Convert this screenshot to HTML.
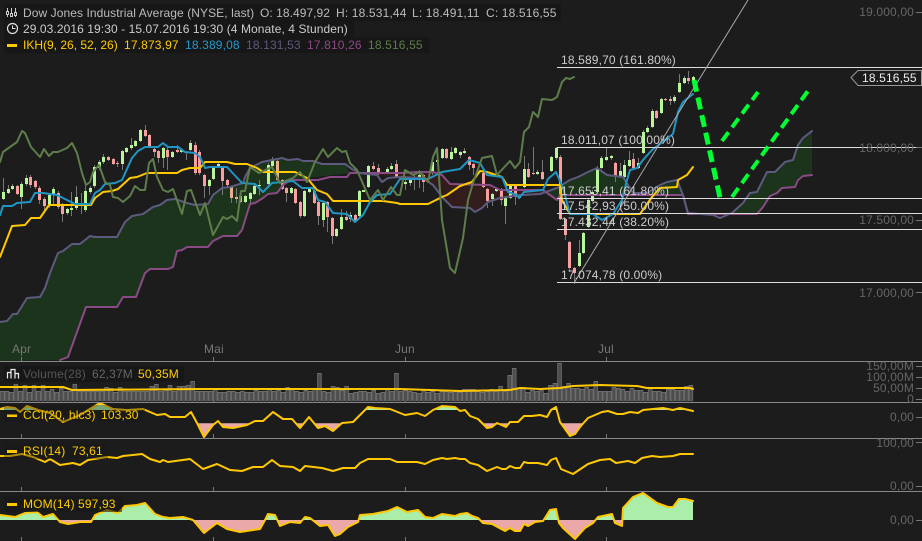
<!DOCTYPE html>
<html><head><meta charset="utf-8"><style>
html,body{margin:0;padding:0;background:#1c1c1c;width:922px;height:541px;overflow:hidden}
svg{display:block;position:absolute;left:0;top:0}
text{font-family:"Liberation Sans",sans-serif;font-size:12px;letter-spacing:.15px}
.ax{fill:#666}.lb{fill:#bbb}.fb{fill:#ccc}.y{fill:#fc0}
.l{fill:none;stroke-width:2;stroke-linejoin:round;stroke-linecap:round}
</style></head><body>
<svg width="922" height="541" viewBox="0 0 922 541" xmlns="http://www.w3.org/2000/svg">
<defs>
<clipPath id="main"><rect x="0" y="0" width="922" height="361"/></clipPath>
<clipPath id="volC"><rect x="0" y="362" width="695" height="39.5"/></clipPath>
<clipPath id="cciP"><rect x="0" y="423.3" width="922" height="15"/></clipPath>
<clipPath id="cciG"><rect x="0" y="403" width="922" height="7"/></clipPath>
<clipPath id="momP"><rect x="0" y="520" width="922" height="21"/></clipPath>
<clipPath id="momG"><rect x="0" y="492" width="922" height="28"/></clipPath>
<polygon id="cciA" points="0,409 7,407 15,408 20,412 27,406 38,410 50,413 63,422 80,415 93,407 100,403 113,409 127,410 143,409 157,415 165,414 170,417 185,417 191,412 197,423 204,437 213,425 218,421 223,427 233,428 247,425 255,421 263,421 273,412 283,419 292,419 300,428 309,417 318,428 325,426 333,431 342,423 353,422 368,407 375,408 390,409 405,415 417,413 425,416 433,410 442,406 455,407 460,411 465,410 470,416 478,419 487,428 492,427 497,423 506,427 510,422 518,422 524,416 532,416 540,415 547,417 551,410 556,407 560,422 570,436 575,434 580,427 588,418 602,412 608,411 617,414 623,414 630,412 638,413 643,410 663,408 673,410 680,408 693,411 693,417 0,417"/>
<polygon id="momA" points="0,515 15,517 25,513 37,512 43,517 53,514 60,522 68,524 80,522 91,522 95,515 107,510 118,513 125,506 137,505 145,503 155,514 163,517 170,518 183,517 193,520 204,533 217,523 227,529 240,532 260,529 265,520 268,514 275,515 280,526 290,522 300,523 305,517 310,518 320,526 328,525 335,536 340,534 348,527 358,522 360,515 373,514 388,511 397,507 407,512 418,510 425,517 433,518 442,514 455,516 460,514 467,513 472,516 478,518 483,523 492,524 505,531 510,528 515,531 520,531 524,524 528,526 535,522 543,521 550,510 556,509 559,523 563,528 575,539 585,528 593,523 598,517 612,514 615,523 622,526 623,508 633,497 643,493 657,503 668,507 673,507 679,499 685,499 693,501 693,520 0,520"/>
<path id="vol" fill="none" d="M-2.2 401m4.53-10v10m4.53-10v10m4.53-9v9m4.53-17v17m4.53-10v10m4.53-16v16m4.53-9v9m4.53-16v16m4.53-10v10m4.53-16v16m4.53-10v10m4.53-12v12m4.53-9v9m4.53-13v13m4.53-10v10m4.53-10v10m4.53-17v17m4.53-10v10m4.53-10v10m4.53-10v10m4.53-10v10m4.53-10v10m4.53-10v10m4.53-14v14m4.53-13v13m4.53-9v9m4.53-14v14m4.53-10v10m4.53-10v10m4.53-10v10m4.53-10v10m4.53-10v10m4.53-10v10m4.53-15v15m4.53-17v17m4.53-10v10m4.53-11v11m4.53-16v16m4.53-10v10m4.53-15v15m4.53-15v15m4.53-16v16m4.53-20v20m4.53-10v10m4.53-10v10m4.53-10v10m4.53-10v10m4.53-12v12m4.53-9v9m4.53-9v9m4.53-10v10m4.53-10v10m4.53-9v9m4.53-10v10m4.53-9v9m4.53-9v9m4.53-11v11m4.53-10v10m4.53-10v10m4.53-12v12m4.53-10v10m4.53-11v11m4.53-9v9m4.53-14v14m4.53-13v13m4.53-10v10m4.53-9v9m4.53-11v11m4.53-10v10m4.53-12v12m4.53-28v28m4.53-10v10m4.53-9v9m4.53-15v15m4.53-14v14m4.53-11v11m4.53-15v15m4.53-8v8m4.53-9v9m4.53-10v10m4.53-10v10m4.53-9v9m4.53-11v11m4.53-8v8m4.53-9v9m4.53-12v12m4.53-10v10m4.53-28v28m4.53-10v10m4.53-11v11m4.53-10v10m4.53-9v9m4.53-8v8m4.53-11v11m4.53-9v9m4.53-10v10m4.53-8v8m4.53-10v10m4.53-10v10m4.53-9v9m4.53-10v10m4.53-9v9m4.53-12v12m4.53-12v12m4.53-12v12m4.53-10v10m4.53-9v9m4.53-10v10m4.53-12v12m4.53-10v10m4.53-15v15m4.53-10v10m4.53-26v26m4.53-33v33m4.53-13v13m4.53-14v14m4.53-9v9m4.53-11v11m4.53-10v10m4.53-11v11m4.53-8v8m4.53-16v16m4.53-18v18m4.53-38v38m4.53-15v15m4.53-18v18m4.53-13v13m4.53-13v13m4.53-12v12m4.53-14v14m4.53-12v12m4.53-20v20m4.53-10v10m4.53-10v10m4.53-10v10m4.53-14v14m4.53-13v13m4.53-12v12m4.53-10v10m4.53-13v13m4.53-11v11m4.53-11v11m4.53-9v9m4.53-14v14m4.53-10v10m4.53-10v10m4.53-9v9m4.53-12v12m4.53-12v12m4.53-11v11m4.53-11v11m4.53-15v15m4.53-16v16"/>
</defs>
<rect width="922" height="541" fill="#1c1c1c"/>

<g clip-path="url(#main)">
<!-- cloud -->
<polygon fill="#1c331c" points="0,322 7,321 13,314 17,314 27,298 40,297 45,288 50,273 58,253 63,251 72,244 80,244 90,236 95,237 117,237 125,222 132,216 143,214 153,207 160,205 167,200 175,199 187,203 195,205 208,204 213,195 222,188 230,187 243,183 245,177 250,168 262,162 272,160 282,158 288,160 298,159 303,161 313,161 322,164 345,164 350,173 290,180 283,185 277,193 268,194 263,198 255,203 250,204 242,230 237,236 223,236 213,241 208,247 187,247 182,250 177,251 173,267 168,269 150,269 145,273 136,297 123,297 117,307 86,307 68,357 60,360 0,361"/>
<polygon fill="#331c1c" points="350,173 400,173 417,172 433,172 442,175 450,184 490,185 500,190 543,191 540,194 523,195 513,196 500,198 488,202 482,208 475,212 470,208 452,207 443,198 433,185 423,178 400,177 377,175 367,174 360,173 352,169"/>
<polygon fill="#1c331c" points="540,194 557,188 570,180 583,175 597,168 607,175 623,177 633,193 647,193 660,185 667,182 677,180 683,195 688,213 693,213 713,214 732,213 743,203 750,193 757,192 767,172 775,172 785,162 793,160 798,145 803,138 812,131 812,175 803,176 797,178 795,187 782,188 777,193 770,196 763,207 757,214 688,214 683,195 560,195 557,200 543,191"/>

<!-- wicks -->
<path fill="none" stroke="#777" stroke-width="1" d="M3.5 178V200M8.5 185V194M12.5 184V190M17.5 185V195M21.5 182V209M26.5 175V186M30.5 175V188M35.5 180V189M39.5 186V204M44.5 197V210M49.5 193V208M53.5 187V205M58.5 191V209M62.5 203V222M67.5 208V215M71.5 192V216M76.5 186V210M81.5 193V214M85.5 186V212M90.5 186V194M94.5 165V188M99.5 160V170M103.5 154V164M108.5 156V161M113.5 158V165M117.5 161V167M122.5 150V170M126.5 147V153M131.5 138V150M135.5 140V147M140.5 129V142M145.5 125V137M149.5 134V148M154.5 148V157M158.5 150V163M163.5 147V168M167.5 147V170M172.5 151V158M177.5 145V153M181.5 149V153M186.5 153V160M190.5 140V151M195.5 142V175M199.5 150V175M204.5 174V198M209.5 179V195M213.5 167V180M218.5 163V168M222.5 167V195M227.5 179V187M231.5 186V203M236.5 188V203M240.5 195V203M245.5 195V203M250.5 192V204M254.5 185V195M259.5 180V195M268.5 163V186M272.5 157V167M277.5 160V181M282.5 179V190M286.5 187V202M291.5 187V194M295.5 188V204M300.5 201V218M304.5 190V217M309.5 188V193M314.5 190V204M318.5 201V225M323.5 202V227M327.5 201V232M332.5 217V244M336.5 228V237M341.5 209V230M346.5 211V221M350.5 212V222M355.5 214V222M359.5 190V217M368.5 165V188M373.5 162V170M378.5 164V175M387.5 167V173M391.5 163V170M396.5 160V178M405.5 176V190M410.5 178V186M414.5 172V190M419.5 170V188M423.5 174V192M432.5 160V175M442.5 148V159M446.5 148V159M451.5 147V160M455.5 147V154M460.5 151V158M464.5 148V154M469.5 156V170M473.5 163V175M483.5 170V188M487.5 188V208M492.5 193V206M496.5 188V192M501.5 188V205M505.5 197V224M510.5 184V199M515.5 185V205M519.5 194V199M524.5 156V188M528.5 163V178M533.5 147V175M537.5 170V175M542.5 160V180M551.5 156V172M556.5 147V160M560.5 155V220M565.5 218V240M569.5 241V272M574.5 267V284M579.5 240V267M583.5 232V254M588.5 198V228M592.5 190V202M597.5 166V193M601.5 156V169M606.5 148V161M611.5 155V160M615.5 162V182M620.5 163V178M624.5 160V178M629.5 151V167M633.5 153V170M638.5 158V169M643.5 130V154M647.5 126V133M652.5 109V128M656.5 110V119M661.5 98V114M665.5 98V101M670.5 96V105M674.5 95V103M679.5 74V93M684.5 76V84M688.5 71V84M693.5 76V82"/>
<!-- green bodies -->
<path fill="none" stroke="#b9f59a" stroke-width="3" d="M3.5 192V199M8.5 189V193M12.5 186V189M21.5 184V197M26.5 178V184M49.5 195V205M53.5 189V194M67.5 209V213M71.5 208V210M76.5 197V208M85.5 191V210M90.5 188V192M94.5 167V186M99.5 162V168M103.5 157V162M122.5 151V164M126.5 148V152M131.5 145V148M135.5 141V146M140.5 130V141M163.5 148V158M172.5 152V157M181.5 150V152M190.5 143V150M209.5 180V186M213.5 168V179M218.5 164V167M245.5 196V202M250.5 193V199M254.5 186V194M259.5 185V186M268.5 165V184M272.5 159V166M291.5 188V193M304.5 191V216M309.5 189V192M323.5 203V220M336.5 229V236M341.5 217V229M350.5 215V219M359.5 191V216M363.5 190V192M368.5 166V187M387.5 169V172M391.5 166V169M405.5 182V184M410.5 179V183M419.5 175V180M432.5 162V173M437.5 160V162M442.5 149V158M451.5 152V159M455.5 148V153M460.5 152V155M464.5 151V153M492.5 194V199M496.5 189V191M505.5 198V206M510.5 186V198M519.5 195V198M524.5 169V187M537.5 172V174M551.5 157V171M556.5 148V158M579.5 253V266M583.5 233V253M588.5 200V227M592.5 192V201M597.5 168V192M601.5 158V168M606.5 157V160M611.5 156V158M620.5 171V177M624.5 165V177M629.5 160V166M638.5 163V168M643.5 132V153M647.5 128V132M652.5 111V127M661.5 99V113M674.5 97V101M679.5 83V92M684.5 78V83M693.5 77V81"/>
<!-- red bodies -->
<path fill="none" stroke="#fa9f9f" stroke-width="3" d="M17.5 186V194M30.5 177V185M35.5 181V187M39.5 188V200M44.5 199V206M58.5 193V207M62.5 206V214M108.5 157V160M113.5 159V164M117.5 163V164M145.5 130V136M149.5 135V147M154.5 149V152M158.5 151V158M167.5 150V157M177.5 150V152M195.5 145V173M199.5 152V173M204.5 175V186M222.5 168V181M227.5 180V185M282.5 180V189M286.5 188V193M295.5 189V203M300.5 202V216M314.5 191V203M318.5 202V216M327.5 202V217M332.5 218V236M346.5 217V220M355.5 215V221M373.5 166V169M378.5 168V173M396.5 164V177M423.5 175V182M446.5 149V158M469.5 157V165M473.5 164V168M483.5 173V187M487.5 189V201M501.5 189V200M515.5 186V197M528.5 169V177M533.5 173V174M542.5 172V179M560.5 157V219M565.5 219V235M569.5 242V268M574.5 268V273M615.5 163V177M633.5 159V168M656.5 111V118M665.5 99V100M670.5 99V101M688.5 78V81"/>
<path fill="none" stroke="#e8b090" stroke-width="3" d="M231.5 187V198M236.5 197V199M240.5 196V202M277.5 161V180"/>

<!-- Ichimoku -->
<polyline class="l" stroke="#8a4a86" points="60,360 68,357 86,307 117,307 123,297 136,297 145,273 150,269 168,269 173,267 177,251 182,250 187,247 208,247 213,241 223,236 237,236 242,230 250,204 255,203 263,198 268,194 277,193 283,185 290,180 318,180 330,177 347,177 350,173 400,173 417,172 433,172 442,175 450,184 490,185 500,190 543,190 557,200 560,195 683,195 688,214 757,214 763,207 770,196 777,193 782,188 795,187 798,180 803,176 812,175"/>
<polyline class="l" stroke="#5c5a7e" points="0,322 7,321 13,314 17,314 27,298 40,297 45,288 50,273 58,253 63,251 72,244 80,244 90,236 95,237 117,237 125,222 132,216 143,214 153,207 160,205 167,200 175,199 187,203 195,205 208,204 213,195 222,188 230,187 243,183 245,177 250,168 262,162 272,160 282,158 288,160 298,159 303,161 313,161 322,164 345,164 352,169 360,173 367,174 377,175 382,182 388,178 400,177 423,178 433,185 443,198 452,207 470,208 475,212 482,208 488,202 500,198 513,196 523,195 540,194 557,188 570,180 578,177 588,172 597,168 607,175 623,177 633,193 647,193 660,185 667,182 677,180 683,195 688,213 713,215 720,218 732,213 743,203 750,193 757,192 767,172 775,172 785,162 793,160 798,145 803,138 812,131"/>
<polyline class="l" stroke="#ffc800" points="0,257 12,226 25,225 31,218 40,218 49,205 91,205 95,198 103,192 112,191 118,189 130,178 137,177 147,173 177,173 182,170 190,168 200,168 205,162 227,162 235,164 247,164 257,168 263,172 295,172 307,178 317,190 327,194 333,201 383,201 397,203 400,204 428,204 442,197 447,195 460,186 472,182 480,171 487,172 502,177 507,185 560,185 562,200 570,214 640,214 652,197 660,188 677,187 678,180 687,175 693,167"/>
<polyline class="l" stroke="#2196c4" points="0,215 3,206 12,206 17,203 30,202 35,193 43,193 57,195 65,199 75,204 90,204 95,193 100,190 105,184 115,183 122,180 132,158 138,151 145,147 158,147 163,143 168,147 178,147 185,152 195,153 200,157 205,168 210,167 227,167 242,183 255,184 263,192 272,183 293,181 302,188 313,188 318,200 325,202 333,213 347,214 355,222 363,215 370,202 377,195 390,194 400,179 428,179 442,172 460,169 469,160 480,163 487,175 502,177 508,192 517,195 519,198 524,192 543,190 548,179 556,172 563,188 570,214 593,214 602,220 613,214 622,200 627,180 630,170 637,168 643,160 652,150 673,134 678,112 683,102 693,94"/>
<polyline class="l" stroke="#5d7d4b" points="0,162 3,152 10,147 17,142 22,131 25,133 31,147 40,157 44,149 49,156 53,152 58,152 67,148 72,143 77,153 82,173 86,185 90,182 93,172 99,165 105,182 110,185 113,197 118,198 123,202 130,196 135,186 140,190 145,190 149,163 153,159 157,177 163,190 168,192 173,189 182,214 187,191 191,190 200,215 205,203 213,235 223,217 227,219 232,216 237,221 241,191 245,191 250,167 259,173 272,167 280,183 293,178 300,172 307,182 315,162 323,149 328,157 337,148 342,152 346,151 350,163 357,170 370,200 378,190 383,200 391,187 397,195 400,195 405,170 413,175 420,172 428,182 433,157 437,148 442,220 450,268 455,273 463,238 468,200 473,183 482,158 492,156 497,175 510,161 515,168 520,162 524,132 529,127 533,112 538,117 542,99 552,100 557,97 562,82 566,78 570,79 574,77"/>
</g>

<!-- Fibonacci -->
<path stroke="#ddd" stroke-width="1" fill="none" d="M557 67.5H922M557 147.5H922M557 198.5H922M557 213.5H922M557 229.5H922M557 282.5H922"/>
<path stroke="#aaa" stroke-width="1" fill="none" d="M574 283L748 0"/>
<text x="561" y="64" class="fb">18.589,70 (161.80%)</text>
<text x="561" y="144" class="fb">18.011,07 (100.00%)</text>
<text x="561" y="195" class="fb">17.653,41 (61.80%)</text>
<text x="561" y="210" class="fb">17.542,93 (50.00%)</text>
<text x="561" y="226" class="fb">17.432,44 (38.20%)</text>
<text x="561" y="279" class="fb">17.074,78 (0.00%)</text>

<!-- drawn dashed lines -->
<path fill="none" stroke="#00ff33" stroke-width="5" stroke-dasharray="12 6" d="M694 80L721 202"/>
<path fill="none" stroke="#00ff33" stroke-width="4" stroke-dasharray="11 6" d="M732 197L810 88"/>
<path fill="none" stroke="#00ff33" stroke-width="4" stroke-dasharray="11 6" d="M722 141L758 92"/>

<!-- Month axis -->
<g fill="#777">
<text x="12" y="353">Apr</text><text x="204" y="353">Mai</text><text x="395" y="353">Jun</text><text x="598" y="353">Jul</text>
</g>
<path stroke="#777" stroke-width="1" fill="none" d="M21.5 357V361M213.5 357V361M405.5 357V361M606.5 357V361M21.5 398V402M213.5 398V402M405.5 398V402M606.5 398V402M21.5 434V438M213.5 434V438M405.5 434V438M606.5 434V438M21.5 487V491M213.5 487V491M405.5 487V491M606.5 487V491M21.5 537V541M213.5 537V541M405.5 537V541M606.5 537V541"/>

<!-- Volume -->
<g clip-path="url(#volC)">
<use href="#vol" stroke="#6c6c6c" stroke-width="4.53"/>
<use href="#vol" stroke="#4d4d4d" stroke-width="2.8" transform="translate(0 1)"/>
</g>
<polyline class="l" stroke="#ffc800" points="0,387 63,387 72,390 200,389 320,389 400,389 460,391 510,390 520,388 540,389 560,388 573,386 600,385 637,386 647,388 690,388 693,389"/>

<!-- CCI -->
<use href="#cciA" fill="#eaa8a8" clip-path="url(#cciP)"/>
<use href="#cciA" fill="#aaeeaa" clip-path="url(#cciG)"/>
<polyline class="l" stroke="#ffc800" points="0,409 7,407 15,408 20,412 27,406 38,410 50,413 63,422 80,415 93,407 100,403 113,409 127,410 143,409 157,415 165,414 170,417 185,417 191,412 197,423 204,437 213,425 218,421 223,427 233,428 247,425 255,421 263,421 273,412 283,419 292,419 300,428 309,417 318,428 325,426 333,431 342,423 353,422 368,407 375,408 390,409 405,415 417,413 425,416 433,410 442,406 455,407 460,411 465,410 470,416 478,419 487,428 492,427 497,423 506,427 510,422 518,422 524,416 532,416 540,415 547,417 551,410 556,407 560,422 570,436 575,434 580,427 588,418 602,412 608,411 617,414 623,414 630,412 638,413 643,410 663,408 673,410 680,408 693,411"/>

<!-- RSI -->
<polyline class="l" stroke="#ffc800" points="0,456 10,456 22,454 33,457 45,462 50,459 60,465 73,463 80,465 88,460 107,457 117,458 123,456 142,454 150,459 160,462 163,460 168,462 190,459 203,469 217,464 230,470 242,471 253,467 263,467 272,460 280,466 293,467 300,471 305,466 322,468 333,471 343,468 355,468 360,463 368,459 390,459 397,462 417,462 425,464 433,460 442,458 447,459 455,458 460,459 465,459 470,463 478,465 487,471 497,467 502,469 506,469 510,466 515,468 520,468 524,462 528,463 538,463 547,465 551,460 556,458 561,469 573,474 588,464 600,460 610,459 616,463 628,461 635,463 642,458 652,456 660,457 673,456 680,454 693,454"/>

<!-- MOM -->
<use href="#momA" fill="#eaa8a8" clip-path="url(#momP)"/>
<use href="#momA" fill="#aaeeaa" clip-path="url(#momG)"/>
<polyline class="l" stroke="#ffc800" points="0,515 15,517 25,513 37,512 43,517 53,514 60,522 68,524 80,522 91,522 95,515 107,510 118,513 125,506 137,505 145,503 155,514 163,517 170,518 183,517 193,520 204,533 217,523 227,529 240,532 260,529 265,520 268,514 275,515 280,526 290,522 300,523 305,517 310,518 320,526 328,525 335,536 340,534 348,527 358,522 360,515 373,514 388,511 397,507 407,512 418,510 425,517 433,518 442,514 455,516 460,514 467,513 472,516 478,518 483,523 492,524 505,531 510,528 515,531 520,531 524,524 528,526 535,522 543,521 550,510 556,509 559,523 563,528 575,539 585,528 593,523 598,517 612,514 615,523 622,526 623,508 633,497 643,493 657,503 668,507 673,507 679,499 685,499 693,501"/>

<!-- Panel separators -->
<path stroke="#888" stroke-width="1" fill="none" d="M0 361.5H922M0 402.5H922M0 438.5H922M0 491.5H922"/>

<!-- Right axis -->
<path stroke="#777" stroke-width="1" fill="none" d="M916 12.5H922M916 147.5H922M916 220.5H922M916 292.5H922M916 366.5H922M916 377.5H922M916 388.5H922M916 399.5H922M916 417.5H922M916 442.5H922M916 486.5H922M916 520.5H922"/>
<g class="ax" text-anchor="end">
<text x="914" y="16">19.000,00</text>
<text x="914" y="152">18.000,00</text>
<text x="914" y="224">17.500,00</text>
<text x="914" y="297">17.000,00</text>
<text x="914" y="370">150,00M</text>
<text x="914" y="381">100,00M</text>
<text x="914" y="392">50,00M</text>
<text x="914" y="403">0</text>
<text x="914" y="421">0,00</text>
<text x="914" y="447">100,00</text>
<text x="914" y="490">0,00</text>
<text x="914" y="524">0,00</text>
</g>

<!-- Price tag -->
<polygon points="851,77.5 858,70.5 921.5,70.5 921.5,85.5 858,85.5" fill="#1c1c1c" stroke="#999" stroke-width="1"/>
<text x="862" y="82" fill="#eee">18.516,55</text>

<!-- Legends -->
<rect x="4" y="4" width="557" height="17" fill="#171717"/>
<rect x="4" y="21" width="350" height="16" fill="#171717"/>
<rect x="4" y="37" width="425" height="16" fill="#171717"/>
<path fill="none" stroke="#ccc" stroke-width="1" d="M7.5 8V17M11.5 8V17M15.5 8V17"/>
<path fill="#1c1c1c" stroke="#ccc" stroke-width="1" d="M6.5 11.5h2v3h-2zM10.5 13.5h2v3h-2zM14.5 12.5h2v3h-2z"/>
<text x="23" y="17" class="lb" style="letter-spacing:.08px">Dow Jones Industrial Average (NYSE, last)</text>
<text x="260" y="17" class="lb" style="letter-spacing:.05px">O: 18.497,92</text>
<text x="336" y="17" class="lb">H: 18.531,44</text>
<text x="412" y="17" class="lb">L: 18.491,11</text>
<text x="486" y="17" class="lb">C: 18.516,55</text>
<circle cx="12.5" cy="28.5" r="5" fill="none" stroke="#ddd" stroke-width="1.2"/>
<path fill="none" stroke="#ddd" stroke-width="1" d="M12.5 25.5V28.5H15.5"/>
<text x="23" y="33" fill="#ccc" style="letter-spacing:.08px">29.03.2016 19:30 - 15.07.2016 19:30 (4 Monate, 4 Stunden)</text>
<rect x="7" y="44" width="10" height="3" fill="#ffc800"/>
<text x="23" y="49" class="y" style="letter-spacing:0">IKH(9, 26, 52, 26)</text>
<text x="124" y="49" class="y">17.873,97</text>
<text x="185" y="49" fill="#2299cc">18.389,08</text>
<text x="246" y="49" fill="#5c5a7e">18.131,53</text>
<text x="307" y="49" fill="#8a4a86">17.810,26</text>
<text x="368" y="49" fill="#5d7d4b">18.516,55</text>

<rect x="4" y="366" width="180" height="16" fill="#171717" fill-opacity=".8"/>
<path fill="#1c1c1c" stroke="#eee" stroke-width="1.2" d="M7.5 378.5V372.5H11V378.5M11 378.5V369.5H15V378.5M15 378.5V373.5H18.5V378.5"/>
<text x="23" y="378" fill="#555">Volume(28)</text>
<text x="92" y="378" fill="#666">62,37M</text>
<text x="138" y="378" class="y">50,35M</text>

<rect x="4" y="405" width="141" height="17" fill="#171717" fill-opacity=".35"/>
<rect x="7" y="414.5" width="10" height="2.5" fill="#ffc800"/>
<text x="23" y="419" class="y">CCI(20, hlc3)</text>
<text x="101" y="419" class="y">103,30</text>

<rect x="4" y="443" width="104" height="16" fill="#171717" fill-opacity=".35"/>
<rect x="7" y="450" width="10" height="3" fill="#ffc800"/>
<text x="23" y="455" class="y">RSI(14)</text>
<text x="72" y="455" class="y">73,61</text>

<rect x="4" y="496" width="118" height="16" fill="#171717" fill-opacity=".6"/>
<rect x="7" y="503" width="10" height="3" fill="#ffc800"/>
<text x="23" y="508" class="y">MOM(14)</text>
<text x="78" y="508" class="y">597,93</text>
</svg>
</body></html>
